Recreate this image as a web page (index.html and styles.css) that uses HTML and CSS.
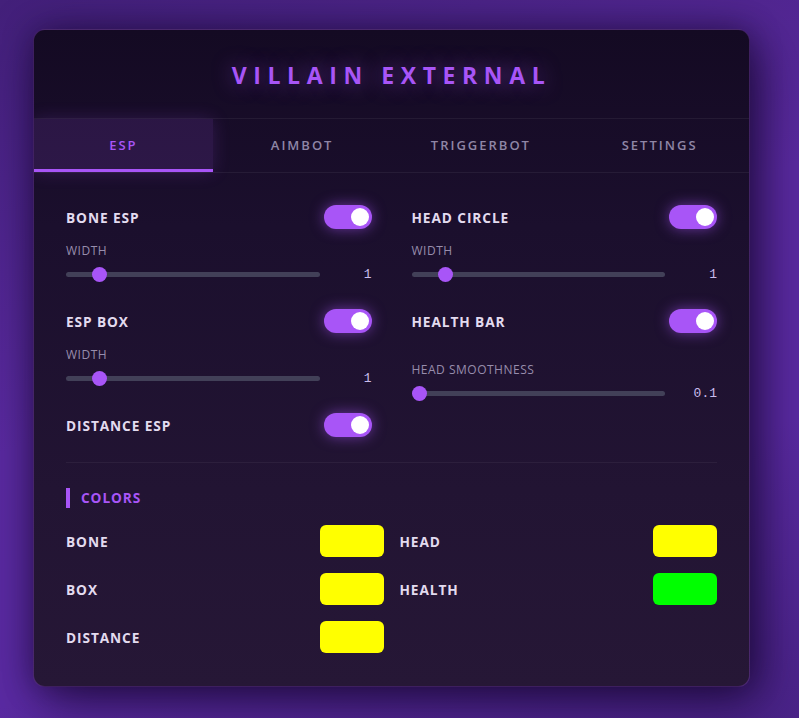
FILE: index.html
```html
<!DOCTYPE html>
<html lang="en">
<head>
<meta charset="utf-8">
<title>Villain External</title>
<link rel="stylesheet" href="styles.css">
</head>
<body>
<div class="panel">
  <header class="header"><h1 class="title">VILLAIN EXTERNAL</h1></header>
  <nav class="tabs">
    <div class="tab active">ESP</div>
    <div class="tab">AIMBOT</div>
    <div class="tab">TRIGGERBOT</div>
    <div class="tab">SETTINGS</div>
  </nav>
  <main class="content">
    <div class="features">
      <div class="col">
        <div class="group">
          <div class="toggle-row"><span class="label">BONE ESP</span><span class="toggle"><span class="knob"></span></span></div>
          <div class="slider-block">
            <div class="slider-label">WIDTH</div>
            <div class="slider-row"><div class="track"><span class="thumb" style="--p:0.11"></span></div><span class="value">1</span></div>
          </div>
        </div>
        <div class="group">
          <div class="toggle-row"><span class="label">ESP BOX</span><span class="toggle"><span class="knob"></span></span></div>
          <div class="slider-block">
            <div class="slider-label">WIDTH</div>
            <div class="slider-row"><div class="track"><span class="thumb" style="--p:0.11"></span></div><span class="value">1</span></div>
          </div>
        </div>
        <div class="group">
          <div class="toggle-row"><span class="label">DISTANCE ESP</span><span class="toggle"><span class="knob"></span></span></div>
        </div>
      </div>
      <div class="col">
        <div class="group">
          <div class="toggle-row"><span class="label">HEAD CIRCLE</span><span class="toggle"><span class="knob"></span></span></div>
          <div class="slider-block">
            <div class="slider-label">WIDTH</div>
            <div class="slider-row"><div class="track"><span class="thumb" style="--p:0.11"></span></div><span class="value">1</span></div>
          </div>
        </div>
        <div class="group">
          <div class="toggle-row"><span class="label">HEALTH BAR</span><span class="toggle"><span class="knob"></span></span></div>
        </div>
        <div class="group">
          <div class="slider-block standalone">
            <div class="slider-label">HEAD SMOOTHNESS</div>
            <div class="slider-row"><div class="track"><span class="thumb" style="--p:0"></span></div><span class="value">0.1</span></div>
          </div>
        </div>
      </div>
    </div>
    <div class="divider"></div>
    <section class="colors">
      <h2 class="section-title">COLORS</h2>
      <div class="color-grid">
        <div class="color-row"><span class="label">BONE</span><span class="swatch yellow"></span></div>
        <div class="color-row"><span class="label">HEAD</span><span class="swatch yellow"></span></div>
        <div class="color-row"><span class="label">BOX</span><span class="swatch yellow"></span></div>
        <div class="color-row"><span class="label">HEALTH</span><span class="swatch green"></span></div>
        <div class="color-row"><span class="label">DISTANCE</span><span class="swatch yellow"></span></div>
      </div>
    </section>
  </main>
</div>
</body>
</html>
```
FILE: styles.css
```css
* { box-sizing: border-box; }
html, body { margin: 0; padding: 0; }
body {
  width: 799px;
  height: 718px;
  overflow: hidden;
  font-family: "Open Sans", "Noto Sans", sans-serif;
  background: linear-gradient(160deg, #43207a 0%, #5a2aa0 45%, #5a2aa2 70%, #4a2388 100%);
  padding: 29px 0 0 33px;
}
.panel {
  width: 717px;
  border: 1px solid rgba(168, 85, 247, 0.28);
  border-radius: 12px;
  background: linear-gradient(180deg, #140a23 0%, #1b0f2d 30%, #221433 70%, #261736 100%);
  box-shadow: 10px 14px 50px rgba(12, 2, 30, 0.65), 0 0 30px rgba(12, 2, 30, 0.35);
  overflow: hidden;
}
.header {
  height: 89px;
  padding-top: 29px;
  border-bottom: 1px solid rgba(255, 255, 255, 0.06);
  text-align: center;
}
.title {
  margin: 0;
  font-size: 23px;
  line-height: 32px;
  font-weight: 700;
  letter-spacing: 6.6px;
  padding-left: 0;
  color: #a855f7;
  text-shadow: 0 0 20px rgba(168, 85, 247, 0.55);
}
.tabs {
  display: grid;
  grid-template-columns: repeat(4, 1fr);
  height: 54px;
  border-bottom: 1px solid rgba(255, 255, 255, 0.06);
}
.tab {
  display: flex;
  align-items: center;
  justify-content: center;
  font-size: 13px;
  font-weight: 600;
  letter-spacing: 2px;
  color: #8f86a6;
  border-bottom: 3px solid transparent;
  padding-top: 2px;
}
.tab.active {
  color: #a855f7;
  border-bottom-color: #a855f7;
  background: rgba(168, 85, 247, 0.14);
  box-shadow: 0 0 18px rgba(168, 85, 247, 0.18);
}
.content {
  padding: 32px 32px 33px 32px;
}
.features {
  display: grid;
  grid-template-columns: 1fr 1fr;
  column-gap: 40px;
}
.col {
  display: flex;
  flex-direction: column;
  gap: 27px;
}
.toggle-row {
  display: flex;
  align-items: center;
  justify-content: space-between;
  height: 24px;
}
.label {
  font-size: 13.7px;
  font-weight: 700;
  letter-spacing: 0.9px;
  color: #e3dbef;
}
.toggle {
  position: relative;
  width: 48px;
  height: 24px;
  border-radius: 12px;
  background: #a855f7;
  box-shadow: 0 0 14px rgba(168, 85, 247, 0.55);
}
.knob {
  position: absolute;
  top: 3px;
  right: 3px;
  width: 18px;
  height: 18px;
  border-radius: 50%;
  background: #ffffff;
}
.slider-block { margin-top: 14px; }
.slider-block.standalone { margin-top: 2px; }
.slider-label {
  font-size: 12px;
  line-height: 16px;
  letter-spacing: 0.5px;
  color: #978dac;
  margin-bottom: 8px;
}
.slider-row {
  display: flex;
  align-items: center;
  gap: 12px;
  height: 15px;
}
.track {
  position: relative;
  flex: 1;
  height: 5px;
  border-radius: 3px;
  background: #424058;
}
.thumb {
  position: absolute;
  top: 50%;
  left: calc(var(--p) * (100% - 15px));
  width: 15px;
  height: 15px;
  margin-top: -7.5px;
  border-radius: 50%;
  background: #a855f7;
}
.value {
  width: 40px;
  text-align: right;
  font-family: "Liberation Mono", "DejaVu Sans Mono", monospace;
  font-size: 13px;
  color: #c9bcec;
}
.divider {
  height: 1px;
  margin-top: 25px;
  background: rgba(255, 255, 255, 0.05);
}
.section-title {
  margin: 25px 0 17px;
  border-left: 4px solid #a855f7;
  padding-left: 11px;
  height: 20px;
  line-height: 20px;
  font-size: 13.7px;
  font-weight: 700;
  letter-spacing: 0.9px;
  color: #a855f7;
}
.color-grid {
  display: grid;
  grid-template-columns: 1fr 1fr;
  column-gap: 16px;
  row-gap: 16px;
}
.color-row {
  display: flex;
  align-items: center;
  justify-content: space-between;
  height: 32px;
}
.swatch {
  width: 64px;
  height: 32px;
  border-radius: 6px;
}
.swatch.yellow { background: #ffff00; }
.swatch.green { background: #00ff00; }
```
